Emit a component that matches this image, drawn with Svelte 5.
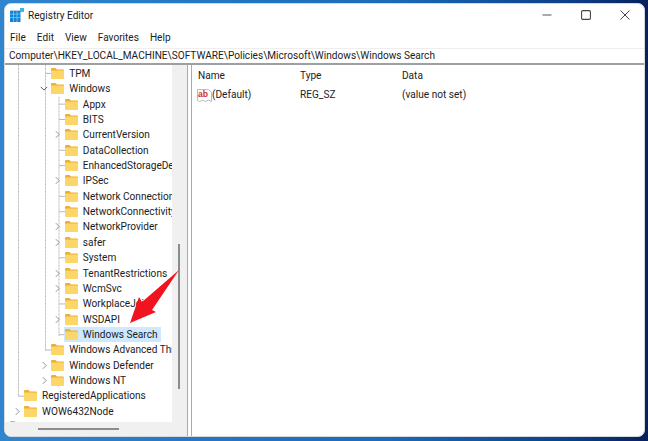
<script>
  const rows = [
    { d: 2, t: 'TPM' },
    { d: 2, t: 'Windows', open: true },
    { d: 3, t: 'Appx' },
    { d: 3, t: 'BITS' },
    { d: 3, t: 'CurrentVersion', more: true },
    { d: 3, t: 'DataCollection' },
    { d: 3, t: 'EnhancedStorageDevices' },
    { d: 3, t: 'IPSec', more: true },
    { d: 3, t: 'Network Connections' },
    { d: 3, t: 'NetworkConnectivityStatusIndicator' },
    { d: 3, t: 'NetworkProvider', more: true },
    { d: 3, t: 'safer', more: true },
    { d: 3, t: 'System' },
    { d: 3, t: 'TenantRestrictions', more: true },
    { d: 3, t: 'WcmSvc', more: true },
    { d: 3, t: 'WorkplaceJoin' },
    { d: 3, t: 'WSDAPI', more: true },
    { d: 3, t: 'Windows Search', sel: true },
    { d: 2, t: 'Windows Advanced Threat Protection' },
    { d: 2, t: 'Windows Defender', more: true },
    { d: 2, t: 'Windows NT', more: true },
    { d: 0, t: 'RegisteredApplications' },
    { d: 0, t: 'WOW6432Node', more: true },
    { d: -1, t: '' }
  ];
  const rowH = 15.37;
  const lineX = { 0: 13.5, 2: 40.5, 3: 54 };
  const stubs = rows
    .map((r, i) => ({ ...r, y: 8.4 + i * rowH }))
    .filter((r) => !r.more && !r.open && r.d >= 0);
</script>

<div class="desktop">
  <div class="window">
    <header class="title">
      <svg class="app" viewBox="0 0 16 16" width="14" height="14" aria-hidden="true">
        <rect x="0" y="3" width="12" height="13" fill="#1283d6" />
        <path d="M4 3v13M8 3v13M0 7h12M0 11h12" stroke="#8fd0f5" stroke-width=".8" />
        <rect x="11.5" y="0" width="4.5" height="4.5" fill="#3fb0ea" />
      </svg>
      <span class="title-text">Registry Editor</span>
      <div class="controls">
        <svg viewBox="0 0 10 10" width="10" height="10" aria-hidden="true"><path d="M0.5 5h9" stroke="#555" stroke-width="1.1" /></svg>
        <svg viewBox="0 0 10 10" width="10" height="10" aria-hidden="true"><rect x="0.6" y="0.6" width="8.8" height="8.8" rx="1.2" fill="none" stroke="#444" stroke-width="1.1" /></svg>
        <svg viewBox="0 0 10 10" width="10" height="10" aria-hidden="true"><path d="M0.5 0.5l9 9M9.5 0.5l-9 9" stroke="#444" stroke-width="1" /></svg>
      </div>
    </header>

    <nav class="menu">
      <span>File</span><span>Edit</span><span>View</span><span>Favorites</span><span>Help</span>
    </nav>

    <div class="address">Computer\HKEY_LOCAL_MACHINE\SOFTWARE\Policies\Microsoft\Windows\Windows Search</div>

    <div class="panes">
      <section class="tree-pane">
        <div class="tree-top">
          <div class="tree">
            <svg class="guides" width="167" height="359" aria-hidden="true">
              <path d="M13.5 0V332M40.5 0V286M54 32V271" stroke="#b9b9b9" stroke-width="1" stroke-dasharray="1 .4" />
              {#each stubs as s}
                <path d="M{lineX[s.d]} {s.y}h6" stroke="#b9b9b9" stroke-width="1" />
              {/each}
            </svg>
            {#each rows as r}
              <div class="row" style="margin-left:{5 + r.d * 13.6}px">
                <span class="chev">
                  {#if r.more}
                    <svg viewBox="0 0 6 10" width="5" height="9" aria-hidden="true"><path d="M1 1l4 4-4 4" fill="none" stroke="#8a8a8a" stroke-width="1.1" /></svg>
                  {:else if r.open}
                    <svg viewBox="0 0 10 6" width="8" height="5" aria-hidden="true"><path d="M1 1l4 4 4-4" fill="none" stroke="#444" stroke-width="1.1" /></svg>
                  {/if}
                </span>
                <span class="item" class:sel={r.sel}>
                  <svg class="folder" viewBox="0 0 13 11" width="13" height="11" aria-hidden="true">
                    <path d="M0 1a1 1 0 0 1 1-1h3.5l1.5 1.5H12a1 1 0 0 1 1 1V3H0z" fill="#efb02f" />
                    <rect x="0" y="2.4" width="13" height="8.6" rx=".8" fill="#fcd668" />
                  </svg>
                  <span class="label">{r.t}</span>
                </span>
              </div>
            {/each}
          </div>
          <div class="vscroll"><i></i></div>
        </div>
        <div class="hscroll"><i></i></div>
      </section>

      <div class="splitter"></div>

      <section class="list">
        <div class="cols">
          <span class="c1">Name</span><span class="c2">Type</span><span>Data</span>
        </div>
        <div class="cols val">
          <span class="c1 name">
            <svg viewBox="0 0 15 14" width="15" height="14" aria-hidden="true">
              <path d="M0.5 1.5h11l3 3v9l-3-1.4-3 1.4-3-1.4-3 1.4-2-1z" fill="#fff" stroke="#a9a9a9" stroke-width=".8" />
              <text x="1" y="9" font-size="8.6" font-weight="700" fill="#d0322a" font-family="Liberation Sans, sans-serif">ab</text>
            </svg>
            (Default)
          </span>
          <span class="c2">REG_SZ</span><span>(value not set)</span>
        </div>
      </section>
    </div>
  </div>

  <svg class="arrow" viewBox="0 0 52 56" width="52" height="56" aria-hidden="true">
    <path d="M49 1L12 33L9 28L0 54L26 43L22 41z" fill="#f0141e" />
  </svg>
</div>

<style>
  :global(body) {
    margin: 0;
  }
  .desktop {
    position: relative;
    box-sizing: border-box;
    width: 648px;
    height: 441px;
    padding: 3px 3px 4px 4px;
    overflow: hidden;
    background: linear-gradient(90deg, #2f86cf 0%, #1a6bb8 60%, #0c3f8a 88%, #08205c 100%);
    font-family: Roboto, "Noto Sans", sans-serif;
    color: #1c1c1c;
  }
  .window {
    display: flex;
    flex-direction: column;
    height: 100%;
    overflow: hidden;
    background: #fff;
    border-radius: 7px;
    box-sizing: border-box;
    border: 1px solid #d5d8dc;
  }
  .title {
    display: flex;
    align-items: center;
    height: 22px;
    padding: 0 0 0 5px;
    flex: none;
  }
  .title-text {
    margin-left: 4px;
    font-size: 10.1px;
  }
  .controls {
    margin-left: auto;
    display: flex;
    gap: 29px;
    padding-right: 14px;
    align-items: center;
  }
  .menu {
    display: flex;
    gap: 11px;
    height: 22px;
    align-items: center;
    padding-left: 5px;
    font-size: 10.1px;
    flex: none;
  }
  .address {
    flex: none;
    height: 14px;
    line-height: 14px;
    padding-left: 4px;
    font-size: 10.1px;
    white-space: nowrap;
    border-top: 1px solid #eeeeee;
    border-bottom: 2px solid #9aa0a3;
    box-sizing: content-box;
  }
  .panes {
    flex: 1;
    display: flex;
    min-height: 0;
  }
  .tree-pane {
    width: 182px;
    flex: none;
    display: flex;
    flex-direction: column;
    background: #f0f0f0;
  }
  .tree-top {
    flex: 1;
    min-height: 0;
    display: flex;
  }
  .tree {
    position: relative;
    width: 167px;
    flex: none;
    box-sizing: border-box;
    padding-top: 0.7px;
    background: #fff;
    overflow: hidden;
  }
  .guides {
    position: absolute;
    left: 0;
    top: 0;
  }
  .row {
    position: relative;
    display: flex;
    align-items: center;
    height: 15.37px;
    box-sizing: border-box;
    white-space: nowrap;
    font-size: 10.1px;
  }
  .chev {
    display: flex;
    align-items: center;
    justify-content: center;
    width: 14px;
    flex: none;
    height: 100%;
  }
  .item {
    display: inline-flex;
    align-items: center;
    height: 100%;
    gap: 5px;
    padding-right: 2px;
  }
  .item.sel {
    background: #cde8ff;
    margin-left: -1px;
    padding-left: 1px;
    padding-right: 3px;
  }
  .folder {
    flex: none;
  }
  .vscroll {
    flex: 1;
    position: relative;
  }
  .vscroll i {
    position: absolute;
    left: 6px;
    top: 179px;
    width: 2px;
    height: 145px;
    background: #8c8c8c;
  }
  .hscroll {
    height: 14px;
    flex: none;
    position: relative;
  }
  .hscroll i {
    position: absolute;
    left: 33px;
    top: 6px;
    width: 81px;
    height: 2px;
    background: #8c8c8c;
  }
  .splitter {
    width: 5px;
    flex: none;
    box-sizing: border-box;
    border-left: 1px solid #a9acae;
    border-right: 1px solid #a9acae;
    background: #fff;
  }
  .list {
    flex: 1;
    font-size: 10.1px;
    padding-top: 2px;
    white-space: nowrap;
  }
  .cols {
    display: flex;
    height: 16px;
    align-items: center;
    padding-left: 6px;
  }
  .val {
    height: 17px;
    margin-top: 3px;
  }
  .c1 {
    width: 102px;
  }
  .c2 {
    width: 102px;
  }
  .name {
    display: flex;
    align-items: center;
    margin-left: -1px;
    margin-right: 1px;
  }
  .arrow {
    position: absolute;
    left: 130px;
    top: 269px;
  }
</style>
